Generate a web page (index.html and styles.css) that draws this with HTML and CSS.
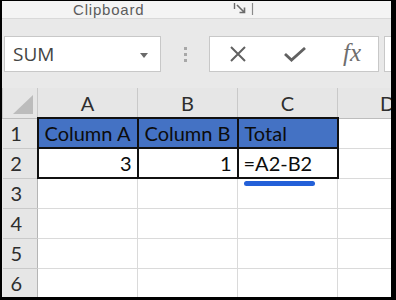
FILE: index.html
```html
<!doctype html>
<html lang="en">
<head>
    <meta charset="UTF-8">
    <title>Excel formula</title>
    <link rel="stylesheet" href="styles.css">
</head>
<body>

<div class="frame">
    <!-- ribbon group label, cut by the screenshot -->
    <div class="ribbon">
        <span class="group-label">Clipboard</span>
        <svg class="launcher" width="22" height="14" viewBox="0 0 22 14">
            <path d="M1.5 1 V7" stroke="#6a6a6a" stroke-width="1.4" fill="none"/>
            <path d="M4 3 L11 10 M6.5 10.5 H11.5 V5.5" stroke="#6a6a6a" stroke-width="1.6" fill="none"/>
            <path d="M19.5 1 V13" stroke="#8a8a8a" stroke-width="1.2" fill="none"/>
        </svg>
    </div>

    <div class="formula-bar">
        <div class="name-box">
            <span>SUM</span>
            <svg class="caret" width="8" height="5" viewBox="0 0 8 5"><path d="M0 0 H8 L4 5 Z" fill="#6a6a6a"/></svg>
        </div>
        <div class="grip"><i></i><i></i><i></i></div>
        <div class="fx-buttons">
            <svg width="18" height="16" viewBox="0 0 18 16">
                <path d="M2 1 L16 15 M16 1 L2 15" stroke="#616161" stroke-width="2" fill="none"/>
            </svg>
            <svg width="22" height="15" viewBox="0 0 22 15">
                <path d="M1 7 L7.5 13 L21 1" stroke="#616161" stroke-width="2.8" fill="none"/>
            </svg>
            <span class="fx">fx</span>
        </div>
        <div class="formula-input"></div>
    </div>

    <table class="sheet">
        <colgroup>
            <col class="c-head">
            <col class="c-col">
            <col class="c-col">
            <col class="c-col">
            <col class="c-col">
        </colgroup>
        <tr class="col-heads">
            <th class="corner"><span class="tri"></span></th>
            <th>A</th>
            <th>B</th>
            <th>C</th>
            <th>D</th>
        </tr>
        <tr>
            <th class="row-head">1</th>
            <td class="title">Column A</td>
            <td class="title">Column B</td>
            <td class="title">Total</td>
            <td></td>
        </tr>
        <tr>
            <th class="row-head">2</th>
            <td class="num boxed">3</td>
            <td class="num boxed">1</td>
            <td class="boxed"><span class="marked">=A2-B2</span></td>
            <td></td>
        </tr>
        <tr><th class="row-head">3</th><td></td><td></td><td></td><td></td></tr>
        <tr><th class="row-head">4</th><td></td><td></td><td></td><td></td></tr>
        <tr><th class="row-head">5</th><td></td><td></td><td></td><td></td></tr>
        <tr><th class="row-head">6</th><td></td><td></td><td></td><td></td></tr>
    </table>
</div>

</body>
</html>
```

FILE: styles.css
```css
body {
    margin: 0;
    background: #fff;
}

.frame {
    width: 396px;
    height: 300px;
    box-sizing: border-box;
    border-style: solid;
    border-color: #000;
    border-width: 1px 5px 3px 2px;
    overflow: hidden;
    background: #e9e9e9;
}

/* ribbon strip */
.ribbon {
    height: 17px;
    background: #f4f4f4;
    border-bottom: 1px solid #d9d9d9;
    display: flex;
    align-items: flex-start;
}
.group-label {
    margin-left: 71px;
    font: 15px "Liberation Sans", sans-serif;
    letter-spacing: 0.8px;
    color: #5c5c5c;
}
.launcher {
    margin: 1px 0 0 89px;
}

/* name box + formula buttons */
.formula-bar {
    height: 69px;
    box-sizing: border-box;
    padding-top: 17px;
    display: flex;
    align-items: flex-start;
}
.name-box {
    margin-left: 2px;
    width: 157px;
    height: 36px;
    box-sizing: border-box;
    border: 1px solid #c8c8c8;
    background: #fff;
    display: flex;
    align-items: center;
    justify-content: space-between;
    padding: 0 12px 0 8px;
    font: 19px "Open Sans", sans-serif;
    color: #444;
}
.caret {
    margin-top: 2px;
}
.grip {
    width: 48px;
    height: 36px;
    display: flex;
    flex-direction: column;
    align-items: center;
    justify-content: center;
    gap: 3px;
}
.grip i {
    width: 3px;
    height: 3px;
    background: #a8a8a8;
}
.fx-buttons {
    width: 170px;
    height: 36px;
    box-sizing: border-box;
    border: 1px solid #c8c8c8;
    background: #fff;
    display: grid;
    grid-template-columns: 56px 58px 56px;
    justify-items: center;
    align-items: center;
}
.fx {
    font: italic 25px "Liberation Serif", serif;
    color: #6e6e6e;
    margin-top: -2px;
}
.formula-input {
    flex: 1;
    margin-left: 5px;
    height: 36px;
    box-sizing: border-box;
    border: 1px solid #c8c8c8;
    border-right: none;
    background: #fff;
}

/* worksheet grid */
.sheet {
    border-collapse: collapse;
    table-layout: fixed;
    width: 436px;
    font: 20px "Lato", sans-serif;
    color: #0c0c0c;
}
.c-head { width: 35px; }
.c-col { width: 100px; }
.sheet tr {
    height: 30px;
}
.sheet td {
    background: #fff;
    border: 1px solid #dadada;
    padding: 0 5px;
    white-space: nowrap;
}
.sheet th {
    background: #e6e6e6;
    border: 1px solid #c9c9c9;
    font-weight: normal;
    color: #2e2e2e;
    padding: 0;
}
.col-heads th {
    border-top: none;
    border-bottom-color: #bdbdbd;
}
.row-head {
    text-align: center;
    padding-right: 7px !important;
    border-left: none !important;
    border-right-color: #b5b5b5 !important;
}
.corner {
    position: relative;
}
.corner .tri {
    position: absolute;
    right: 4px;
    bottom: 4px;
    width: 0;
    height: 0;
    border-style: solid;
    border-width: 0 0 19px 20px;
    border-color: transparent transparent #bcbcbc transparent;
}

.sheet td.title {
    background: #4472c4;
    border: 2px solid #111;
    padding-left: 6px;
}
.sheet td.boxed {
    border: 2px solid #111;
}
.sheet td.num {
    text-align: right;
}

/* blue pen mark under the formula */
.marked {
    position: relative;
}
.marked::after {
    content: "";
    position: absolute;
    left: 0;
    right: -3px;
    top: 100%;
    margin-top: 6px;
    height: 5px;
    border-radius: 3px;
    background: #2360d8;
}
```
